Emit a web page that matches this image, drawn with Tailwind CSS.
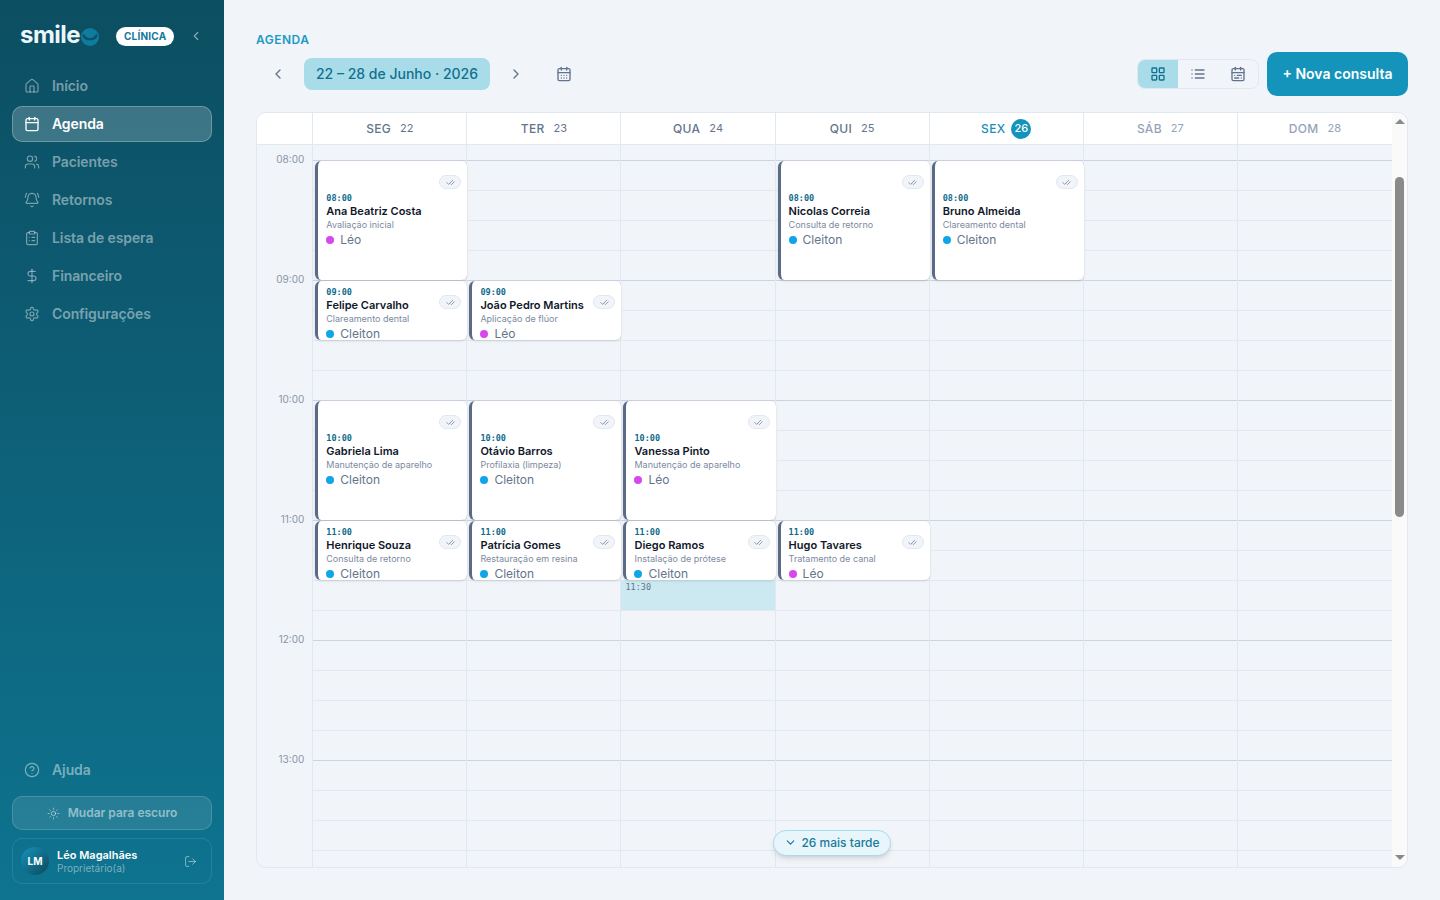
<!DOCTYPE html>
<html lang="pt-BR">
<head>
  <meta charset="UTF-8" />
  <title>Agenda | Smile</title>
  <script src="https://cdn.jsdelivr.net/npm/@tailwindcss/browser@4"></script>
</head>
<body class="h-screen overflow-hidden flex bg-[#f1f4f9] font-['Inter',sans-serif] text-slate-800">

  <!-- Sidebar -->
  <aside class="w-[224px] shrink-0 h-full flex flex-col px-3 pb-4 bg-linear-to-b from-[#0c4e62] to-[#0e7490]">
    <div class="h-[70px] pl-2 flex items-center">
      <span class="text-[24px] leading-none font-bold tracking-[-0.5px] text-[#eaf6f9]">smile</span>
      <svg class="w-[18px] h-[18px] ml-[1px] mt-[3px]" viewBox="0 0 18 18" fill="none">
        <circle cx="9" cy="9" r="9" fill="#0f7c9e"/>
        <path d="M2.5 7.5c2 5 11 5 13 0" stroke="#0a4f66" stroke-width="2.2" stroke-linecap="round"/>
      </svg>
      <span class="ml-[17px] mt-[2px] h-[19px] w-[58px] rounded-full bg-white flex items-center justify-center text-[10px] font-bold tracking-[0.2px] text-[#14789c]">CLÍNICA</span>
      <svg class="w-[14px] h-[14px] ml-[15px] mt-[2px] text-white/50" viewBox="0 0 24 24" fill="none" stroke="currentColor" stroke-width="2" stroke-linecap="round" stroke-linejoin="round"><path d="m15 18-6-6 6-6"/></svg>
    </div>

    <nav class="flex flex-col gap-[2px] -mt-[2px] text-[14px] font-semibold tracking-[-0.1px] text-white/45">
      <a class="h-[36px] pl-[11px] pb-[1px] flex items-center gap-[12px] rounded-[10px] border border-transparent">
        <svg class="w-[16px] h-[16px]" viewBox="0 0 24 24" fill="none" stroke="currentColor" stroke-width="1.75" stroke-linecap="round" stroke-linejoin="round"><path d="M15 21v-8a1 1 0 0 0-1-1h-4a1 1 0 0 0-1 1v8"/><path d="M3 10a2 2 0 0 1 .709-1.528l7-5.999a2 2 0 0 1 2.582 0l7 5.999A2 2 0 0 1 21 10v9a2 2 0 0 1-2 2H5a2 2 0 0 1-2-2z"/></svg>
        Início
      </a>
      <a class="h-[36px] pl-[11px] pb-[1px] flex items-center gap-[12px] rounded-[10px] border border-white/25 bg-white/20 text-white">
        <svg class="w-[16px] h-[16px]" viewBox="0 0 24 24" fill="none" stroke="currentColor" stroke-width="2" stroke-linecap="round" stroke-linejoin="round"><path d="M8 2v4"/><path d="M16 2v4"/><rect width="18" height="18" x="3" y="4" rx="2"/><path d="M3 10h18"/></svg>
        Agenda
      </a>
      <a class="h-[36px] pl-[11px] pb-[1px] flex items-center gap-[12px] rounded-[10px] border border-transparent">
        <svg class="w-[16px] h-[16px]" viewBox="0 0 24 24" fill="none" stroke="currentColor" stroke-width="1.75" stroke-linecap="round" stroke-linejoin="round"><path d="M16 21v-2a4 4 0 0 0-4-4H6a4 4 0 0 0-4 4v2"/><circle cx="9" cy="7" r="4"/><path d="M22 21v-2a4 4 0 0 0-3-3.87"/><path d="M16 3.13a4 4 0 0 1 0 7.75"/></svg>
        Pacientes
      </a>
      <a class="h-[36px] pl-[11px] pb-[1px] flex items-center gap-[12px] rounded-[10px] border border-transparent">
        <svg class="w-[16px] h-[16px]" viewBox="0 0 24 24" fill="none" stroke="currentColor" stroke-width="1.75" stroke-linecap="round" stroke-linejoin="round"><path d="M10.268 21a2 2 0 0 0 3.464 0"/><path d="M22 8c0-2.3-.8-4.3-2-6"/><path d="M3.262 15.326A1 1 0 0 0 4 17h16a1 1 0 0 0 .74-1.673C19.41 13.956 18 12.499 18 8A6 6 0 0 0 6 8c0 4.499-1.411 5.956-2.738 7.326"/><path d="M4 2C2.8 3.7 2 5.7 2 8"/></svg>
        Retornos
      </a>
      <a class="h-[36px] pl-[11px] pb-[1px] flex items-center gap-[12px] rounded-[10px] border border-transparent">
        <svg class="w-[16px] h-[16px]" viewBox="0 0 24 24" fill="none" stroke="currentColor" stroke-width="1.75" stroke-linecap="round" stroke-linejoin="round"><rect width="8" height="4" x="8" y="2" rx="1" ry="1"/><path d="M16 4h2a2 2 0 0 1 2 2v14a2 2 0 0 1-2 2H6a2 2 0 0 1-2-2V6a2 2 0 0 1 2-2h2"/><path d="M12 11h4"/><path d="M12 16h4"/><path d="M8 11h.01"/><path d="M8 16h.01"/></svg>
        Lista de espera
      </a>
      <a class="h-[36px] pl-[11px] pb-[1px] flex items-center gap-[12px] rounded-[10px] border border-transparent">
        <svg class="w-[16px] h-[16px]" viewBox="0 0 24 24" fill="none" stroke="currentColor" stroke-width="1.75" stroke-linecap="round" stroke-linejoin="round"><line x1="12" x2="12" y1="2" y2="22"/><path d="M17 5H9.5a3.5 3.5 0 0 0 0 7h5a3.5 3.5 0 0 1 0 7H6"/></svg>
        Financeiro
      </a>
      <a class="h-[36px] pl-[11px] pb-[1px] flex items-center gap-[12px] rounded-[10px] border border-transparent">
        <svg class="w-[16px] h-[16px]" viewBox="0 0 24 24" fill="none" stroke="currentColor" stroke-width="1.75" stroke-linecap="round" stroke-linejoin="round"><path d="M12.22 2h-.44a2 2 0 0 0-2 2v.18a2 2 0 0 1-1 1.73l-.43.25a2 2 0 0 1-2 0l-.15-.08a2 2 0 0 0-2.73.73l-.22.38a2 2 0 0 0 .73 2.73l.15.1a2 2 0 0 1 1 1.72v.51a2 2 0 0 1-1 1.74l-.15.09a2 2 0 0 0-.73 2.73l.22.38a2 2 0 0 0 2.73.73l.15-.08a2 2 0 0 1 2 0l.43.25a2 2 0 0 1 1 1.73V20a2 2 0 0 0 2 2h.44a2 2 0 0 0 2-2v-.18a2 2 0 0 1 1-1.73l.43-.25a2 2 0 0 1 2 0l.15.08a2 2 0 0 0 2.73-.73l.22-.39a2 2 0 0 0-.73-2.73l-.15-.08a2 2 0 0 1-1-1.74v-.5a2 2 0 0 1 1-1.74l.15-.09a2 2 0 0 0 .73-2.73l-.22-.38a2 2 0 0 0-2.73-.73l-.15.08a2 2 0 0 1-2 0l-.43-.25a2 2 0 0 1-1-1.73V4a2 2 0 0 0-2-2z"/><circle cx="12" cy="12" r="3"/></svg>
        Configurações
      </a>
    </nav>

    <div class="mt-auto flex flex-col">
      <a class="h-[36px] pl-[11px] pb-[1px] flex items-center gap-[12px] border border-transparent text-[14px] font-semibold tracking-[-0.1px] text-white/45">
        <svg class="w-[16px] h-[16px]" viewBox="0 0 24 24" fill="none" stroke="currentColor" stroke-width="1.75" stroke-linecap="round" stroke-linejoin="round"><circle cx="12" cy="12" r="10"/><path d="M9.09 9a3 3 0 0 1 5.83 1c0 2-3 3-3 3"/><path d="M12 17h.01"/></svg>
        Ajuda
      </a>
      <button class="mt-[8px] h-[34px] rounded-[10px] border border-white/15 bg-white/10 flex items-center justify-center gap-[8px] text-[12px] font-semibold text-white/50">
        <svg class="w-[13px] h-[13px]" viewBox="0 0 24 24" fill="none" stroke="currentColor" stroke-width="1.75" stroke-linecap="round" stroke-linejoin="round"><circle cx="12" cy="12" r="4"/><path d="M12 2v2"/><path d="M12 20v2"/><path d="m4.93 4.93 1.41 1.41"/><path d="m17.66 17.66 1.41 1.41"/><path d="M2 12h2"/><path d="M20 12h2"/><path d="m6.34 17.66-1.41 1.41"/><path d="m19.07 4.93-1.41 1.41"/></svg>
        Mudar para escuro
      </button>
      <div class="mt-[8px] h-[46px] rounded-[10px] border border-white/10 pl-[8px] pr-[14px] flex items-center">
        <div class="w-[28px] h-[28px] rounded-full bg-linear-to-br from-[#1594bb] to-[#0b4a5e] flex items-center justify-center text-[10px] font-bold text-white">LM</div>
        <div class="ml-[8px] pt-[2px] flex-1">
          <div class="text-[11px] leading-[13px] font-semibold text-white">Léo Magalhães</div>
          <div class="text-[10px] leading-[13px] text-white/45">Proprietário(a)</div>
        </div>
        <svg class="w-[13px] h-[13px] text-white/50" viewBox="0 0 24 24" fill="none" stroke="currentColor" stroke-width="1.75" stroke-linecap="round" stroke-linejoin="round"><path d="M9 21H5a2 2 0 0 1-2-2V5a2 2 0 0 1 2-2h4"/><polyline points="16 17 21 12 16 7"/><line x1="21" x2="9" y1="12" y2="12"/></svg>
      </div>
    </div>
  </aside>

  <!-- Main -->
  <main class="flex-1 min-w-0 h-full flex flex-col px-8 pt-[33px] pb-8">
    <div class="h-[14px] leading-[14px] text-[12px] font-semibold tracking-[0.5px] text-[#1c9ac2]">AGENDA</div>

    <!-- Toolbar -->
    <div class="mt-[5px] h-[44px] shrink-0 flex items-center">
      <button class="w-[44px] mr-[4px] flex justify-center text-slate-500">
        <svg class="w-[16px] h-[16px]" viewBox="0 0 24 24" fill="none" stroke="currentColor" stroke-width="2" stroke-linecap="round" stroke-linejoin="round"><path d="m15 18-6-6 6-6"/></svg>
      </button>
      <div class="h-[32px] w-[186px] pb-[1px] rounded-[8px] bg-[#a8dce9] flex items-center justify-center text-[14px] font-medium text-[#11708f]">22 – 28 de Junho · 2026</div>
      <button class="w-[52px] flex justify-center text-slate-500">
        <svg class="w-[16px] h-[16px]" viewBox="0 0 24 24" fill="none" stroke="currentColor" stroke-width="2" stroke-linecap="round" stroke-linejoin="round"><path d="m9 18 6-6-6-6"/></svg>
      </button>
      <button class="ml-[2px] w-[40px] flex justify-center text-slate-500">
        <svg class="w-[16px] h-[16px]" viewBox="0 0 24 24" fill="none" stroke="currentColor" stroke-width="2" stroke-linecap="round" stroke-linejoin="round"><path d="M8 2v4"/><path d="M16 2v4"/><rect width="18" height="18" x="3" y="4" rx="2"/><path d="M3 10h18"/><path d="M8 14h.01"/><path d="M12 14h.01"/><path d="M16 14h.01"/><path d="M8 18h.01"/><path d="M12 18h.01"/><path d="M16 18h.01"/></svg>
      </button>

      <div class="ml-auto h-[30px] w-[122px] rounded-[8px] border border-[#e2e8f0] overflow-hidden flex text-slate-500">
        <button class="w-[40px] bg-[#a8dce9] text-[#11708f] flex items-center justify-center">
          <svg class="w-[16px] h-[16px]" viewBox="0 0 24 24" fill="none" stroke="currentColor" stroke-width="2" stroke-linecap="round" stroke-linejoin="round"><rect width="7" height="7" x="3" y="3" rx="1"/><rect width="7" height="7" x="14" y="3" rx="1"/><rect width="7" height="7" x="14" y="14" rx="1"/><rect width="7" height="7" x="3" y="14" rx="1"/></svg>
        </button>
        <button class="w-[40px] flex items-center justify-center">
          <svg class="w-[16px] h-[16px]" viewBox="0 0 24 24" fill="none" stroke="currentColor" stroke-width="2" stroke-linecap="round" stroke-linejoin="round"><path d="M3 12h.01"/><path d="M3 18h.01"/><path d="M3 6h.01"/><path d="M8 12h13"/><path d="M8 18h13"/><path d="M8 6h13"/></svg>
        </button>
        <button class="w-[40px] flex items-center justify-center">
          <svg class="w-[16px] h-[16px]" viewBox="0 0 24 24" fill="none" stroke="currentColor" stroke-width="2" stroke-linecap="round" stroke-linejoin="round"><rect width="18" height="18" x="3" y="4" rx="2"/><path d="M16 2v4"/><path d="M3 10h18"/><path d="M8 2v4"/><path d="M17 14h-6"/><path d="M13 18H7"/><path d="M7 14h.01"/><path d="M17 18h.01"/></svg>
        </button>
      </div>
      <button class="ml-[8px] h-[44px] w-[141px] pb-[2px] rounded-[10px] bg-[#1594bb] text-white text-[14px] font-semibold">+ Nova consulta</button>
    </div>

    <!-- Calendar -->
    <div class="relative mt-[16px] flex-1 min-h-0 rounded-[10px] border border-[#e2e8f0] overflow-hidden flex">
      <div class="flex-1 min-w-0 flex flex-col">
        <div class="h-[32px] shrink-0 flex bg-white border-b border-[#e2e8f0]">
          <div class="w-[56.3px] shrink-0 border-r border-[#e2e8f0]"></div>
          <div id="dayHeads" class="flex-1 grid grid-cols-7"></div>
        </div>
        <div class="flex-1 min-h-0 flex">
          <div id="hours" class="w-[56.3px] shrink-0 pt-[15px] border-r border-[#e2e8f0]"></div>
          <div id="days" class="flex-1 grid grid-cols-7"></div>
        </div>
      </div>

      <!-- Scrollbar -->
      <div class="w-[15px] shrink-0 flex flex-col items-center bg-[#fafafa]">
        <svg class="mt-[6px] w-[10px] h-[5px] text-[#8a8a8a]" viewBox="0 0 10 5" fill="currentColor"><path d="M5 0l5 5H0z"/></svg>
        <div class="mt-[53px] w-[9px] h-[340px] rounded-full bg-[#8a8a8a]"></div>
        <svg class="mt-auto mb-[7px] w-[10px] h-[5px] text-[#8a8a8a]" viewBox="0 0 10 5" fill="currentColor"><path d="M5 5l5-5H0z"/></svg>
      </div>

      <button class="absolute z-30 bottom-[11px] left-1/2 -translate-x-1/2 h-[26px] w-[118px] pb-[1px] rounded-full border border-[#a8dce9] bg-[#e8f6fb] shadow-md flex items-center justify-center gap-[4px] text-[12px] font-medium text-[#1a7a9a]">
        <svg class="w-[13px] h-[13px]" viewBox="0 0 24 24" fill="none" stroke="currentColor" stroke-width="2.25" stroke-linecap="round" stroke-linejoin="round"><path d="m6 9 6 6 6-6"/></svg>
        26 mais tarde
      </button>
    </div>
  </main>

  <script>
    const days = [
      { label: "SEG", num: 22 }, { label: "TER", num: 23 }, { label: "QUA", num: 24 },
      { label: "QUI", num: 25 }, { label: "SEX", num: 26, today: true },
      { label: "SÁB", num: 27, weekend: true }, { label: "DOM", num: 28, weekend: true }
    ];

    // day index, start time, patient, procedure, dentist, hours after 08:00, tall card?
    const appts = [
      [0, "08:00", "Ana Beatriz Costa", "Avaliação inicial", "Léo", 0, true],
      [3, "08:00", "Nicolas Correia", "Consulta de retorno", "Cleiton", 0, true],
      [4, "08:00", "Bruno Almeida", "Clareamento dental", "Cleiton", 0, true],
      [0, "09:00", "Felipe Carvalho", "Clareamento dental", "Cleiton", 1, false],
      [1, "09:00", "João Pedro Martins", "Aplicação de flúor", "Léo", 1, false],
      [0, "10:00", "Gabriela Lima", "Manutenção de aparelho", "Cleiton", 2, true],
      [1, "10:00", "Otávio Barros", "Profilaxia (limpeza)", "Cleiton", 2, true],
      [2, "10:00", "Vanessa Pinto", "Manutenção de aparelho", "Léo", 2, true],
      [0, "11:00", "Henrique Souza", "Consulta de retorno", "Cleiton", 3, false],
      [1, "11:00", "Patrícia Gomes", "Restauração em resina", "Cleiton", 3, false],
      [2, "11:00", "Diego Ramos", "Instalação de prótese", "Cleiton", 3, false],
      [3, "11:00", "Hugo Tavares", "Tratamento de canal", "Léo", 3, false]
    ];

    const checkIcon = `<svg class="w-[9px] h-[9px]" viewBox="0 0 24 24" fill="none" stroke="currentColor" stroke-width="2.5" stroke-linecap="round" stroke-linejoin="round"><path d="M18 6 7 17l-5-5"/><path d="m22 10-7.5 7.5L13 16"/></svg>`;

    document.getElementById("dayHeads").innerHTML = days.map(d => {
      const color = d.today ? "text-[#1a8fb5] gap-[6px]" : d.weekend ? "text-[#94a3b8] gap-[9px]" : "text-[#64748b] gap-[9px]";
      const num = d.today
        ? `<span class="w-[20px] h-[20px] rounded-full bg-[#1594bb] text-white text-[11px] font-medium tracking-normal flex items-center justify-center">${d.num}</span>`
        : `<span class="text-[11px] font-normal tracking-normal">${d.num}</span>`;
      return `<div class="flex items-center justify-center border-r border-[#e2e8f0] last:border-r-0 text-[12px] font-medium tracking-[0.3px] ${color}">${d.label}${num}</div>`;
    }).join("");

    let hoursHtml = "";
    for (let h = 8; h < 14; h++) {
      hoursHtml += `<div class="h-[120px] pr-[8px] text-right text-[10px] leading-[14px] text-[#8a94a6]"><span class="block -translate-y-[8px]">${String(h).padStart(2, "0")}:00</span></div>`;
    }
    document.getElementById("hours").innerHTML = hoursHtml;

    document.getElementById("days").innerHTML = days.map((d, i) => {
      const cards = appts.filter(a => a[0] === i).map(a => {
        const tall = a[6];
        const dot = a[4] === "Léo" ? "bg-[#d946ef]" : "bg-[#0ea5e9]";
        const place = tall ? "h-[119px] justify-center" : "h-[59px] pt-[6px]";
        return `<div class="absolute left-[2px] right-[-1px] ${place} flex flex-col pl-[8px] overflow-hidden rounded-[6px] border-l-[3px] border-[#5b6b87] bg-white shadow-sm" style="top:${15 + a[5] * 120 + 1}px">
          <span class="absolute right-[6px] top-[14px] w-[22px] h-[14px] rounded-full border border-[#e2e8f0] bg-[#f1f4f9] text-[#8a97ab] flex items-center justify-center">${checkIcon}</span>
          <div class="font-['DejaVu_Sans_Mono',monospace] text-[8.5px] leading-[11px] font-bold text-[#0e6a8a] shrink-0">${a[1]}</div>
          <div class="text-[11px] leading-[15px] font-semibold text-[#0f172a] whitespace-nowrap shrink-0">${a[2]}</div>
          <div class="text-[9px] leading-[12px] text-[#7c8aa0] whitespace-nowrap shrink-0">${a[3]}</div>
          <div class="flex items-center gap-[6px] text-[12px] leading-[17px] text-[#64748b] shrink-0"><span class="w-[8px] h-[8px] rounded-full ${dot}"></span>${a[4]}</div>
        </div>`;
      }).join("");
      const slot = i === 2
        ? `<div class="absolute left-0 right-0 h-[30px] pl-[4px] pt-[1px] bg-[#cce8f1] font-['DejaVu_Sans_Mono',monospace] text-[8.5px] leading-[12px] text-[#64748b]" style="top:${15 + 3 * 120 + 60}px">11:30</div>`
        : "";
      return `<div class="relative border-r border-[#e2e8f0] last:border-r-0 bg-[linear-gradient(#cbd3e1_1px,transparent_1px),linear-gradient(#e2e7f0_1px,transparent_1px)] bg-[size:100%_120px,100%_30px] bg-[position:0_15px]">${slot}${cards}</div>`;
    }).join("");
  </script>
</body>
</html>
